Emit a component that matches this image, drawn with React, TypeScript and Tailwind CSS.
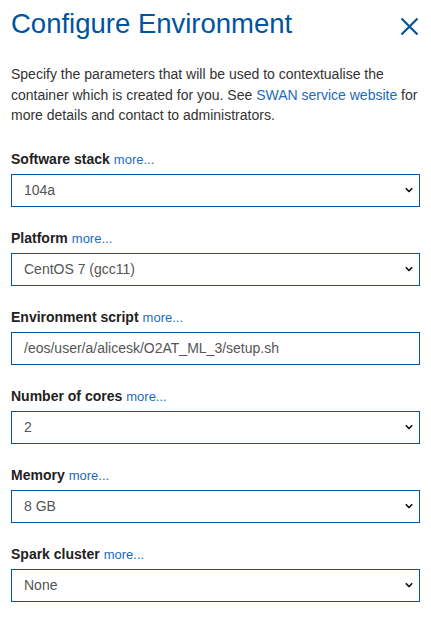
import { useState } from "react";

interface Field {
  id: string;
  label: string;
  kind: "select" | "input";
  value: string;
  options?: string[];
}

const FIELDS: Field[] = [
  { id: "lcg", label: "Software stack", kind: "select", value: "104a", options: ["104a", "105a", "dev4"] },
  { id: "platform", label: "Platform", kind: "select", value: "CentOS 7 (gcc11)", options: ["CentOS 7 (gcc11)", "AlmaLinux 9 (gcc13)"] },
  { id: "script", label: "Environment script", kind: "input", value: "/eos/user/a/alicesk/O2AT_ML_3/setup.sh" },
  { id: "cores", label: "Number of cores", kind: "select", value: "2", options: ["2", "4", "8"] },
  { id: "memory", label: "Memory", kind: "select", value: "8 GB", options: ["8 GB", "10 GB", "16 GB"] },
  { id: "spark", label: "Spark cluster", kind: "select", value: "None", options: ["None", "Analytix", "Hadoop-QA"] },
];

function Chevron() {
  return (
    <svg width="8" height="5" viewBox="0 0 8 5" className="pointer-events-none absolute right-[7px] top-1/2 -translate-y-1/2">
      <path d="M0.8 0.8 L4 4 L7.2 0.8" fill="none" stroke="#111" strokeWidth="1.6" />
    </svg>
  );
}

export default function App() {
  const [values, setValues] = useState<Record<string, string>>(
    Object.fromEntries(FIELDS.map((f) => [f.id, f.value]))
  );

  return (
    <div className="min-h-screen bg-white px-[11px] pt-[6px] font-['Liberation_Sans',Arial,sans-serif]">
      <div className="flex items-start justify-between">
        <h1 className="text-[27.5px] leading-[36px] text-[#0053a1]">Configure Environment</h1>
        <button className="mr-[1px] mt-[11px] text-[#0053a1]" aria-label="Close">
          <svg width="19" height="19" viewBox="0 0 19 19">
            <path d="M1.5 1.5 L17.5 17.5 M17.5 1.5 L1.5 17.5" stroke="currentColor" strokeWidth="2.2" fill="none" />
          </svg>
        </button>
      </div>

      <p className="mt-[22px] text-[14px] leading-[20.5px] text-[#333]">
        Specify the parameters that will be used to contextualise the container which is created for you. See{" "}
        <a href="#" className="text-[#1a6bbf]">SWAN service website</a> for more details and contact to administrators.
      </p>

      <div className="mt-[24px] flex flex-col gap-[22px]">
        {FIELDS.map((field) => (
          <div key={field.id}>
            <label className="flex h-[18px] items-baseline gap-[4px] text-[14px] leading-[18px] font-bold text-[#222]">
              <span>{field.label}</span>
              <a href="#" className="font-normal text-[13px] leading-[18px] text-[#1a6bbf]">more...</a>
            </label>
            <div className="relative mt-[6px]">
              {field.kind === "select" ? (
                <>
                  <select
                    value={values[field.id]}
                    onChange={(e) => setValues({ ...values, [field.id]: e.target.value })}
                    className="block h-[33px] w-full appearance-none border-[1.5px] border-[#0053a1] bg-white pl-[12px] text-[14px] text-[#555] outline-none"
                  >
                    {field.options?.map((o) => (
                      <option key={o}>{o}</option>
                    ))}
                  </select>
                  <Chevron />
                </>
              ) : (
                <input
                  value={values[field.id]}
                  onChange={(e) => setValues({ ...values, [field.id]: e.target.value })}
                  className="block h-[33px] w-full border-[1.5px] border-[#0053a1] bg-white pl-[12px] text-[14px] text-[#555] outline-none"
                />
              )}
            </div>
          </div>
        ))}
      </div>
    </div>
  );
}
